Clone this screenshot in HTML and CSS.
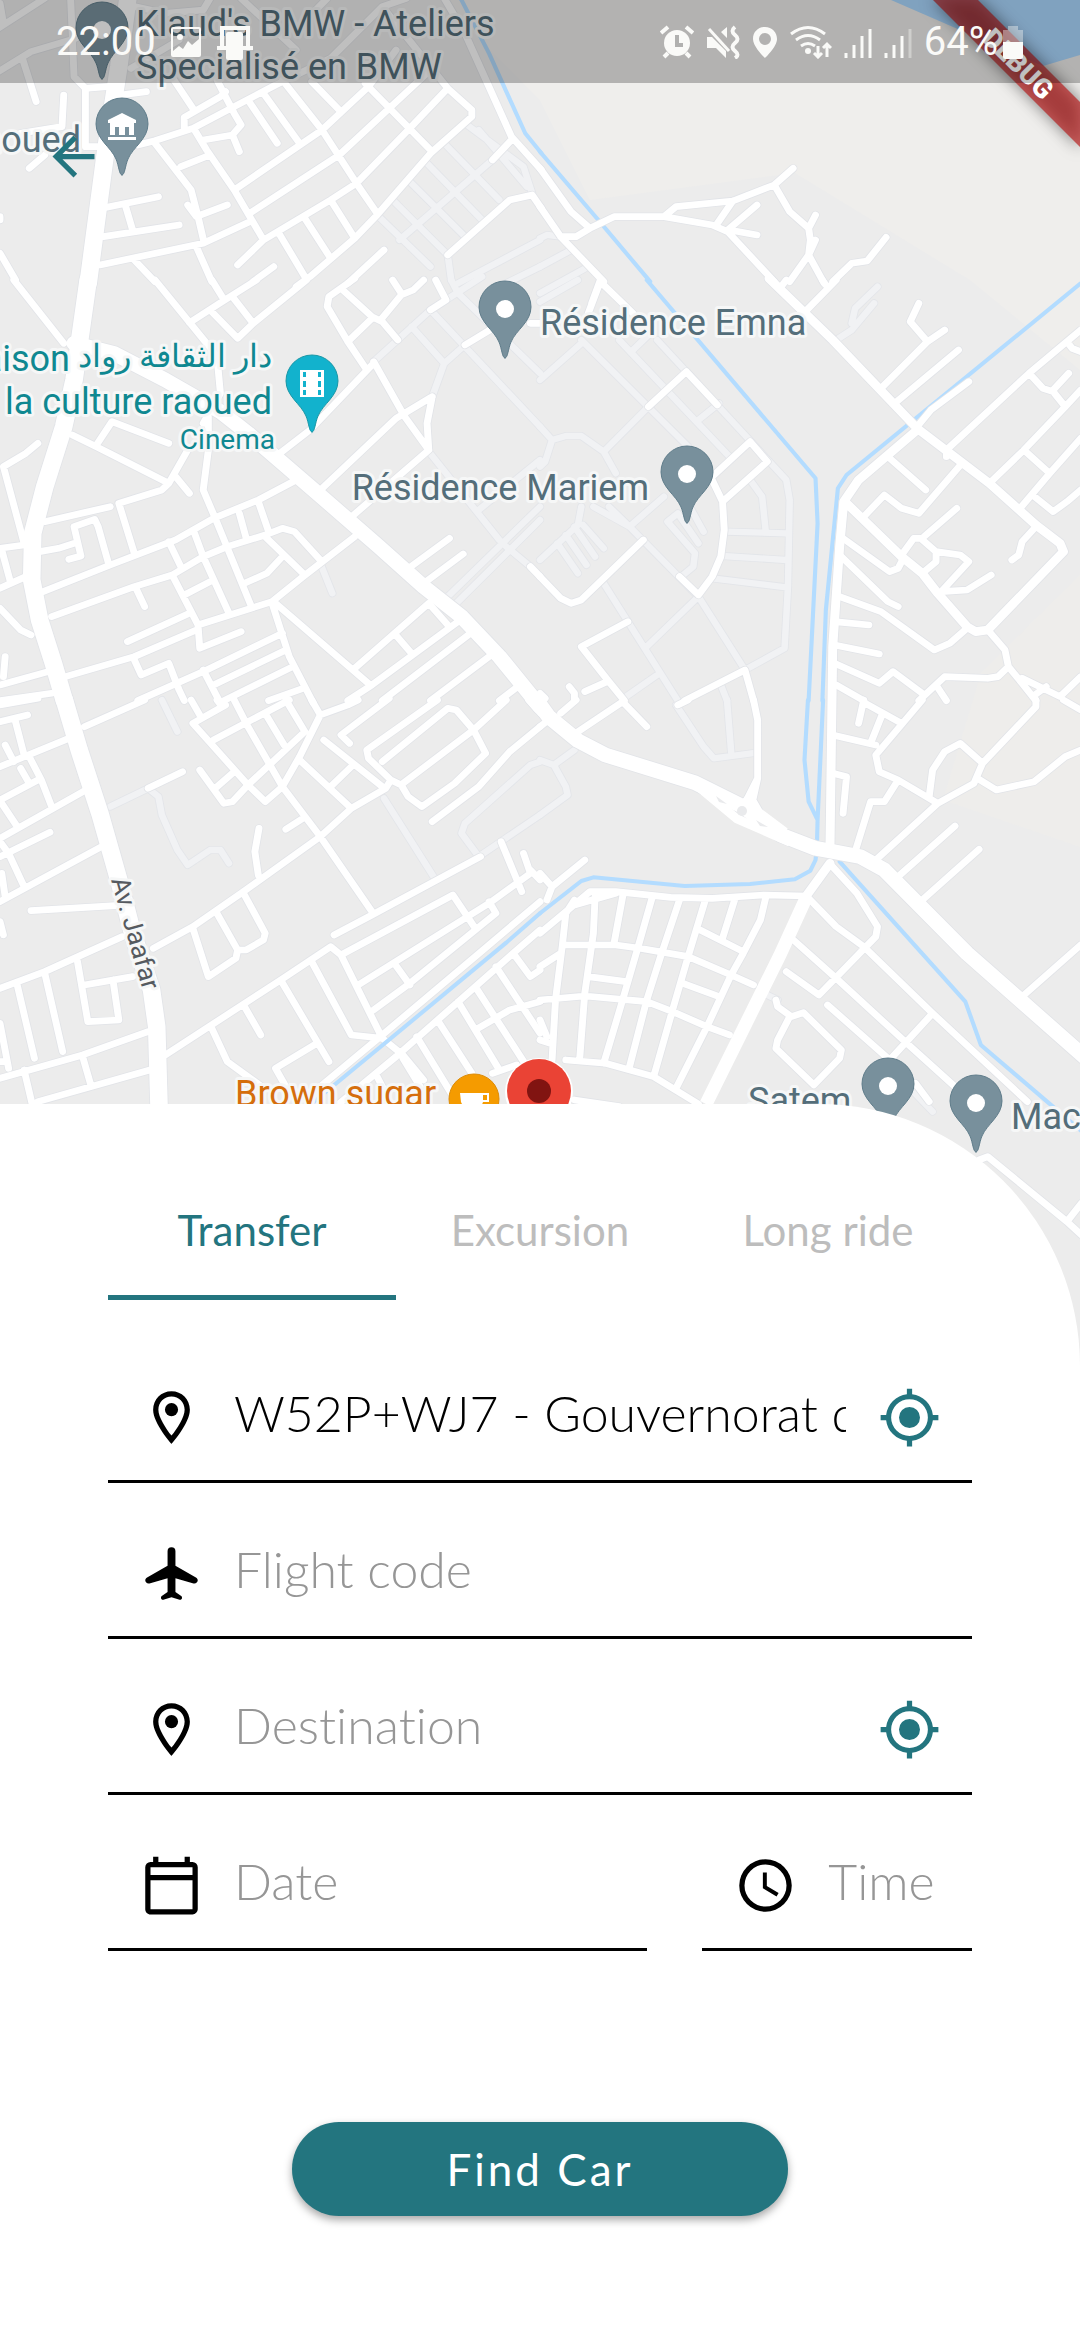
FILE: index.html
```html
<!DOCTYPE html>
<html lang="en">
<head>
<meta charset="utf-8">
<meta name="viewport" content="width=device-width, initial-scale=1">
<title>Find a car</title>
<link rel="stylesheet" href="styles.css">
</head>
<body>
<svg class="sprite" aria-hidden="true">
  <symbol id="i-place" viewBox="0 0 24 24"><path d="M12 2C8.1 2 5 5.1 5 9c0 5.200 7 13 7 13s7-7.800 7-13c0-3.900-3.100-7-7-7zM7 9c0-2.800 2.200-5 5-5s5 2.200 5 5c0 2.900-2.900 7.200-5 9.900C9.900 16.200 7 11.800 7 9z"/><circle cx="12" cy="9" r="2.500"/></symbol>
  <symbol id="i-locate" viewBox="0 0 24 24"><path d="M12 8a4 4 0 1 0 0 8 4 4 0 0 0 0-8zm8.900 3A9 9 0 0 0 13 3.100V1h-2v2.100A9 9 0 0 0 3.100 11H1v2h2.100A9 9 0 0 0 11 20.900V23h2v-2.100a9 9 0 0 0 7.900-7.900H23v-2h-2.100zM12 19a7 7 0 1 1 0-14 7 7 0 0 1 0 14z"/></symbol>
  <symbol id="i-plane" viewBox="0 0 24 24"><path d="M22 14.600c0-.500-.3-.9-.7-1.100L13.500 9V3.500a1.500 1.500 0 0 0-3 0V9l-7.800 4.500c-.4.200-.7.700-.7 1.100 0 .8.800 1.400 1.600 1.200l6.900-2V19l-2.200 1.600c-.2.100-.3.400-.3.600v.1c0 .5.500.8.900.7L12 21l3.100 1c.4.100.9-.2.900-.7v-.1c0-.2-.1-.5-.3-.6L13.500 19v-5.200l6.900 2c.8.200 1.600-.4 1.600-1.200z"/></symbol>
  <symbol id="i-calendar" viewBox="0 0 24 24"><path d="M20 3h-1V1h-2v2H7V1H5v2H4a2 2 0 0 0-2 2v16c0 1.100.9 2 2 2h16a2 2 0 0 0 2-2V5a2 2 0 0 0-2-2zm0 18H4V10h16v11zm0-13H4V5h16v3z"/></symbol>
  <symbol id="i-clock" viewBox="0 0 24 24"><path d="M12 2a10 10 0 1 0 0 20 10 10 0 0 0 0-20zm0 18a8 8 0 1 1 0-16 8 8 0 0 1 0 16zm.5-13H11v6l5.200 3.200.8-1.300-4.500-2.700V7z"/></symbol>
</svg>

<main class="screen">
  <section class="map" aria-label="Map">
    <svg class="map-canvas" viewBox="0 0 1080 1366">
      <defs>
        <g id="river">
          <path transform="scale(.3444 .3333)" d="M1335-10L1420 160 1525 400 1572 460"/>
          <path transform="translate(540) scale(.3444 .3333)" d="M0 455L165 655 320 845"/>
          <path transform="translate(540 280) scale(.3444 .3333)" d="M310 0L800 595 806 730 780 1262M1570 10L890 585 865 625 830 990 820 1262"/>
          <path transform="translate(540 700) scale(.3444 .3333)" d="M778 0L768 180 780 305 806 360M822 0L806 360 804 440 800 480 785 512 740 538 610 552 420 558 155 532 120 543 0 640M870 485L1235 905 1280 1035 1580 1300"/>
        </g>
        <g id="stream">
          <path transform="translate(0 700) scale(.3444 .3333)" d="M1568 640L1470 728 1135 1015 900 1215"/>
        </g>
        <g id="tracks">
          <path transform="scale(.3444 .3333)" d="M1350 370L1520 500 1545 580M1290 430L1450 600M1240 490L1400 660M1190 545L1350 710M1140 600L1300 765 1310 840M1100 650L1250 800M1430 480L1160 720M1390 390L1530 560M1568 720L1330 850M1568 800L1450 860"/>
          <path transform="translate(540) scale(.3444 .3333)" d="M0 715L20 705 60 710M0 800L90 750M0 880L140 800"/>
          <path transform="translate(0 280) scale(.3444 .3333)" d="M930 850L965 940M1290 960L1568 680M1320 975L1568 720M1245 515L1450 780M1470 800L1540 860M1085 245L1250 90 1400-10M1310 0L1330 40M1350 195L1290 250 1255 350M1250 90L1568 440M1330 40L1568 280M1195 140L1290 250M1390 690L1568 540"/>
          <path transform="translate(540 280) scale(.3444 .3333)" d="M0 65L110 0M0 300L120 190M120 180L430 500M230 180L550 530M340 180L715 600 725 660 720 920 710 1105 595 1170M315 380L185 515 220 580M0 440L35 480 75 468H120L185 515M35 480L15 545 0 560M120 680L110 735 0 840M155 680L260 740 360 650M200 680L260 740 460 950 595 1170M610 600L645 650 655 750M540 755L715 760M530 828L715 840M500 895L715 922M460 950L305 1105M185 910L400 1262M340 1185L250 1250M520 370L460 420M270 210L320 160M50 790L110 880M75 765L135 855M100 740L160 830M125 735L185 805M410 890L445 860 450 820 370 725 400 700 460 790M440 690L475 755M860 180L905 150 970 70M905 130L915 85 980 20M525 1215L543 1262"/>
          <path transform="translate(0 700) scale(.3444 .3333)" d="M470 0L515 95M320 320L430 265 460 290 470 345 515 450 545 495 610 450H640L665 490M1115 295L1265 540M1568 185L1540 195 1350 370 1340 400 1390 470 1568 345"/>
          <path transform="translate(540 700) scale(.3444 .3333)" d="M395 15L475 140 505 175 630 158M543 0L555 155M0 180L40 195 100 150M40 195L75 260 80 285 0 345M650 880L690 900M1070 1160L1140 1235"/>
        </g>
        <g id="streets">
          <path transform="scale(.3444 .3333)" d="M-5 85L130-5M-5 215L90 155 220 115M0 10L10 70M65 175L105 305M205-5L215 230 248 265V440H300M248 265L310 260M85 505L130 465M185 285L180 380 60 400M350 285L425 275M400 435L450 422 560 385 680 320 800 255 960 175 1110 20 1180-5M370 15L480 40 590 30 610-5M380 205L520 120M1110 20L1300 265M700-5L860 150M860 90L950-5M1300 265L1370 330V350L1250 460 1095 645 1030 715 900 830 860 860M450 430L555 570 575 650 592 725M535 385V352L640 290 655 275M560 325L505 240M630 240L655 290 680 340 700 375 675 405 590 420M675 405L695 455M565 390L600 450 680 570 765 720 690 795M680 570L935 390 1070 260 1150 150M720 300L805 430M765 280L870 430M820 240L935 390 1035 550 1095 640M905 245L985 330M725 640L985 465 1130 325 1260 200M1060 250L1250 450M1300 265L1190 385 1035 550 960 600 765 720M810 700L885 830M885 655L960 775M960 600L1030 715M725 665L590 730 290 795M570 740L615 845M795 800L735 845M1115 750L1010 850M390 780L450 845M300 710L520 675M365 620L385 690M310 622L460 590M545 615L570 650 660 615M525 500L610 465M0 650V660M0 760L45 840M1290-5L1350 100 1485 410 1572 510M1485 420L1430 480M1300 765L1480 600 1545 585 1572 625"/>
          <path transform="translate(540) scale(.3444 .3333)" d="M0 505L90 635 145 685M0 620L60 710 185 845M60 710H105L145 685 215 650H360L395 620 560 603 680 555 735 505M360 650L500 675 545 695 680 845M560 603L515 670M545 690L630 615M550 690L630 705M680 555L725 635 780 685 785 720 780 765 725 845M780 685L800 645M780 765L800 720M780 765L825 850M850 845L905 790 950 783 1005 712"/>
          <path transform="translate(0 280) scale(.3444 .3333)" d="M40 0L185 190M450 0L600 190 630 230 640 340 590 430M550 128L640 68 745 0M615 0L645 50M610 90L690 175 735 130 890 0M675 50L735 130M1030-5L955 50 950 80 1010 185 1065 270M990 25L1080 110 1110 125 1155 180M1010 185L1080 115M1105 120L1165 45 1200 30 1230 0M1140 0L1165 40M1265 0L1295 60 1250 90M1085 250L900 450 800 530M1085 245L1175 410 1245 510M1255 350L1150 415 920 640M1255 350L1240 430 1245 510 1010 720M1350 195L1430 145M1540 130H1570M210 465L280 500 490 610 545 510M280 495L325 425 490 490M490 610L470 630 345 670 390 820M510 590L550 640M605 410L605 510 590 630 625 715 730 980M110 490L75 520 10 560 70 790M130 725L320 680M115 815L170 805 215 790M200 838L235 828 215 740 275 718 285 740 315 850M0 805L70 795M5 810L30 905M0 925L75 890M125 935L320 855 510 780 620 715 750 660 860 600M150 1010L390 920 500 885 590 830 660 800 770 765 820 745 855 755 930 840M395 925L420 980M750 665L780 755M695 700L715 775M490 785L525 860M565 760L590 830 665 1000M500 885L575 1035 790 965 880 890 1030 770M535 945L610 905M770 770L880 880M820 830L775 880 710 910M800 970L1075 1215M790 970L840 1130 910 1270M575 1035L580 1105 700 1055M370 1085L550 1000M190 1190L390 1130 570 1050M390 1140L410 1185 490 1150 520 1230 535 1262M400 1262L600 1170 820 1060M590 1170L640 1270M620 1215L830 1110M650 1262L850 1160M780 1262L880 1225M0 985L60 1050 90 1065M0 1215L140 1175M15 1130L10 1190M0 1262L150 1240M1180 870L1305 775M1230 910L1345 822M1245 970L1030 1165M1245 970L1300 1035M1330 1025L1080 1215 1010 1262M1145 1060L1195 1120M1360 1065L1110 1262M1420 1130L1250 1262M1510 1215L1450 1262M1540 860L1568 890"/>
          <path transform="translate(540 280) scale(.3444 .3333)" d="M1095 440L1135 390 1245 305M770 95L860 0M700 20L715 0M820 0L830 15M990 325L1125 185 1075 125 1100 70M1125 185L1175 150M1030 370L1215 210M1180 530V510L1420 280 1570 150M1420 280L1460 325 1490 335 1525 380M1490 330L1535 280M1570 330L1525 380 1405 510 1480 580 1570 475M1405 510L1310 605M1390 690L1480 580M1430 645L1490 695 1530 665 1570 630M1530 185L1545 205 1570 215M1010 530L1120 630M940 710L1000 645 1050 685 1100 700 1225 550M1115 770L1210 685M1050 825L1085 775H1105L1150 815 1220 825 1245 845 1165 935 1240 930 1310 885M1150 815V845L1110 880M880 775L1015 875 1040 865 1055 835M875 830L1010 965 1040 980M870 950L990 995 1145 1110 1190 1090 1240 1045M855 1025L955 1035M855 1095L985 1122M855 1150L985 1210 1025 1175 1110 1240M1440 740L1400 785 1390 825 1370 840M1300 1050L1350 1110 1360 1160 1400 1210 1440 1262M1360 1160L1330 1190 1300 1195 1175 1190 1100 1262M1150 1215L1180 1262M1400 1195L1510 1250 1570 1190M860 1215L940 1262M1470 1220L1430 1250M140 100L175 5 270 100M150 70L175 0M315 380L425 275 515 375M500 590L610 485 660 545 530 665M500 600L530 665 535 750 525 830 500 890 460 945 405 890M300 780L120 960 90 970 60 955 0 890M255 1025L120 1100 200 1205 245 1262M130 1235L195 1205M85 1220L100 1240V1262M420 1262L595 1170 620 1262M0 1240L15 1255"/>
          <path transform="translate(0 700) scale(.3444 .3333)" d="M0 15L110-5M0 65L80 45M45 65L70 165M15 135L40 185M0 200L200 115M245 80L420 0M85 170L120 240 150 320M60 205L85 250M0 300L110 240M5 310L50 380M0 415L250 270M0 425L25 460 70 560M0 470L145 397M0 605L295 440M5 520L15 590M90 632L335 617M0 665L10 705M0 865L130 815 355 710M50 855L100 1075M130 820L182 1055M225 785L255 965 345 960 328 840M245 855L385 830M0 970L25 1105M0 1135L240 1065 430 995M70 1110L95 1220M240 1070L265 1160M110 1205L435 1110M0 1085H15M445 745L560 680 700 580 930 410 1020 325 1120 265 1135 240M430 265L530 215M560 685L605 830 685 775 690 750 630 640M690 750H715L765 720 770 700 710 585M750 525L740 455 752 385M580 210L650 310 675 305 720 255 560 70 655 15M555 0L580 45M630 0L645 20M720 255L770 305 820 260 870 170 930 45 1010 15 1040 0M625 265L680 215M620 120L840 0M680 0L720 80 820 260 930 410 1080 635M770 40L825 135M830 0L885 95M905 0L930 45M720 255L885 95M830 388L880 355M870 180L1020 325M940 120L1110 260M960 260L1025 195M1130-5L990 105 1015 130M1270 0L1065 150 1070 175 1135 240 1165 255 1185 290 1225 320 1320 250 1410 160 1375 90 1325 30 1300 25 1110 185M1170 250L1375 90 1470 0M1255 365L1390 260 1480 155 1568 80M1535 0L1570 40M480 1065L815 840 960 740 990 765 1110 1015 1170 1065 1230 1140M970 705L1080 645 1260 545 1395 470M990 765L1315 585 1380 685M1040 855L1420 610 1540 520 1520 460M1540 510L1568 540M1455 425L1515 575M1420 605L1440 640 1380 690 1190 850 1085 930M1145 790L1190 855M905 785L1020 1005 1110 1015M815 840L955 1085M710 920L757 1005M615 985L660 1085 760 1160M920 1030L800 1105 830 1160M1568 605L1400 752 1110 1005 930 1160M1568 690L1490 760 1150 1070 980 1215M1210 1010L1310 1180M1270 960L1370 1120M1330 905L1450 1110M1380 860L1530 1100M1440 800L1568 1000M1490 760L1540 830 1568 810M1380 990L1480 930 1568 905M1170 1075L1220 1160M1095 1130L1120 1180M1430 1120L1500 1095"/>
          <path transform="translate(540 700) scale(.3444 .3333)" d="M0 700L145 575H220L380 592 500 595 650 585 775 588M60 40L105 0M0 80L25 60M110 95L240 5 310 80M400 15L430 0M620 0L632 60V235L600 300M632 235L618 300 640 340M130 480L35 560 0 520M35 560L20 600M100 615L220 580M100 600L75 640 65 735 45 900 35 1080M160 590L155 700 130 880 115 1080M240 590L215 730M325 595L285 740 240 900 185 1090M405 600L350 770 310 900 260 1100M480 600L430 770 385 930 330 1130M565 600L530 715M655 595L640 660 590 760 555 825 485 980 395 1165M70 735H220L290 745 430 770 555 825 620 855M465 690L590 755M140 830L250 845M0 900L130 888 310 905 385 935 485 980 550 1005M415 850L520 890M75 1080L190 1090 330 1130 460 1212M0 800L60 760M0 1020L30 1030M0 960L20 1010M100 1200L230 1220M845 495L920 580 980 680 975 710 810 885 715 815M780 595L860 680 940 740 1140 940 1415 1205M725 710L860 835 1060 1025 1210 1165M1140 940L1020 1075M835 915L1010 1075M685 900L690 920 730 950 765 938 875 1050 870 1075 795 1155 685 1045 690 1020 725 950M1400 890L1570 735M1110 600L1275 448M1045 525L1205 378M975 480L1155 310 1260 250 1285 190 1440 20V0M1130 290L1140 210 1175 155 1220 130 1280 185M1270 235L1325 270 1435 245 1525 170 1570 150M1155 310L1040 240 985 215 975 165 1110 0M1040 240L1000 305H960L915 455M850 105L975 135M850 220L890 230 880 340M940 0L925 70M945 10L1050 70M995 40L960 130M1520 0L1570 30M1090 1150L1130 1205M1275 1380L1300 1370 1530 1565 1572 1605M1530 1565L1572 1510"/>
        </g>
        <g id="roads">
          <path transform="translate(540 280) scale(.3444 .3333)" d="M665-5L850 180 1095 445 1305 610 1440 735 1510 790 1520 815 1300 1050 1265 1055 1240 1040 1155 940 1110 880 1050 830 935 715 885 665M1095 450L925 600 882 665 870 800 850 1100 842 1700M842 1750L775 1845"/>
        </g>
        <g id="avenues">
          <path transform="scale(.3444 .3333)" d="M372-10L345 200 310 430 256 850"/>
          <path transform="translate(0 280) scale(.3444 .3333)" d="M256 0L215 300 185 440 130 620 95 760 92 900 115 1020 155 1150 187 1262"/>
          <path transform="translate(0 700) scale(.3444 .3333)" d="M187 0L230 150 290 340 345 540 385 700 440 870 455 980 464 1300"/>
        </g>
        <g id="boulevard">
          <path transform="translate(0 280) scale(.3444 .3333)" d="M215 190L330 220 480 300 640 395 720 460 900 620 1100 800 1230 920 1340 1010 1450 1130 1568 1280"/>
          <path transform="translate(540 700) scale(.3444 .3333)" d="M-10 0L25 50 110 122 190 165 450 248 590 320 700 405 800 445 930 470 1000 510 1240 760 1580 1070"/>
        </g>
        <path id="pin" d="M0 50C-3 50-3 41-6 34C-11 22-26 14-26-1A26 26 0 0 1 26-1C26 14 11 22 6 34C3 41 3 50 0 50Z"/>
      </defs>

      <rect width="1080" height="1366" fill="#ececec"/>
      <path d="M440 0L540 100 590 200 795 173 970 280 1080 370V0Z" fill="#efeeec"/>
      <path d="M1080 575L981 673 943 800 1080 847Z" fill="#eeedeb"/>
      <path d="M891 0L1043 66 1080 55V0Z" fill="#abd8ff"/>

      <use href="#tracks" class="tracks-edge"/>
      <use href="#tracks" class="tracks"/>
      <use href="#river" class="river"/>
      <use href="#streets" class="streets-edge"/>
      <use href="#roads" class="roads-edge"/>
      <use href="#avenues" class="avenues-edge"/>
      <use href="#boulevard" class="boulevard-edge"/>
      <use href="#streets" class="streets"/>
      <use href="#stream" class="river"/>
      <use href="#roads" class="roads"/>
      <use href="#avenues" class="avenues"/>
      <use href="#boulevard" class="boulevard"/>
      <path d="M807 896L780 955 706 1104" class="promenade"/>
      <path d="M700 788L737 819 790 842M742 800L785 832" class="junction"/>
      <circle cx="742" cy="811" r="5" fill="#e9eaec"/>
      <path d="M716 796l11 8-8-2zM756 820l12 7-8-1z" fill="#e9eaec"/>

      <g class="pins">
        <use href="#pin" x="102" y="29"/>
        <use href="#pin" x="122" y="125"/>
        <use href="#pin" x="505" y="308"/>
        <use href="#pin" x="687" y="473"/>
        <use href="#pin" x="888" y="1085"/>
        <use href="#pin" x="976" y="1102"/>
      </g>
      <use href="#pin" x="312" y="382" fill="#12b2cd" stroke="#1a97a6" stroke-width="1"/>
      <g fill="#fff">
        <circle cx="102" cy="30" r="9"/><circle cx="505" cy="309" r="9"/><circle cx="687" cy="474" r="9"/><circle cx="888" cy="1086" r="9"/><circle cx="976" cy="1103" r="9"/>
        <path d="M122 113l14 7v3h-2v12h-5v-8h-4v8h-6v-8h-4v8h-5v-12h-2v-3zM108 137h28v3h-28z"/>
        <path fill-rule="evenodd" d="M300 370h24v27h-24zM303 372v5h3v-5zM303 381v6h3v-6zM303 390v5h3v-5zM318 372v5h3v-5zM318 381v6h3v-6zM318 390v5h3v-5z"/>
      </g>
      <circle cx="474" cy="1099" r="25" fill="#f59b00" stroke="#dd8b06" stroke-width="1"/>
      <path d="M460 1093h29v9h-6c-2 9-19 9-22 0zM483 1095v5h4v-5z" fill="#fff" fill-rule="evenodd"/>
      <circle cx="539" cy="1092" r="34" fill="#fff"/>
      <circle cx="539" cy="1091" r="32" fill="#ea4335"/>
      <circle cx="539" cy="1091" r="12" fill="#811411"/>

      <g class="labels">
        <text x="136" y="36">Klaud's BMW - Ateliers</text>
        <text x="136" y="79">Spécialisé en BMW</text>
        <text x="81" y="152" text-anchor="end">Raoued</text>
        <text x="540" y="335">Résidence Emna</text>
        <text x="649" y="500" text-anchor="end">Résidence Mariem</text>
        <text x="748" y="1113">Satem</text>
        <text x="1011" y="1129">Mac</text>
        <g class="culture">
          <text x="70" y="371" text-anchor="end">Maison</text>
          <text x="272" y="367" text-anchor="end" lang="ar" class="arabic">دار الثقافة رواد</text>
          <text x="272" y="414" text-anchor="end">de la culture raoued</text>
          <text x="275" y="449" text-anchor="end" class="kind">Cinema</text>
        </g>
        <text x="235" y="1106" class="cafe">Brown sugar</text>
        <text transform="translate(111 880) rotate(74)" class="avenue-name">Av. Jaafar</text>
      </g>
    </svg>

    <button class="back" type="button" aria-label="Back">
      <svg viewBox="0 0 24 24"><path d="M20 11H7.800l5.600-5.600L12 4l-8 8 8 8 1.400-1.400L7.800 13H20z"/></svg>
    </button>

    <svg class="banner" viewBox="0 0 180 180">
      <path class="band" d="M32-1H77L181 103V148Z"/>
      <text transform="translate(118 64) rotate(45)" y="9">DEBUG</text>
    </svg>

    <header class="status">
      <div class="status-group">
        <time>22:00</time>
        <svg width="32" height="34" viewBox="0 0 32 34"><path fill-rule="evenodd" d="M3 2h26q2 0 2 2v26q0 2-2 2H3q-2 0-2-2V4q0-2 2-2zm0 2v22l6-5 4 3 5-8 4 4 7-6V4z"/><circle cx="10" cy="12" r="3"/></svg>
        <svg width="38" height="36" viewBox="0 0 38 36"><path d="M4 2h30v20h3v4H1v-4h3zM8 6v16h22V6z" fill-rule="evenodd"/><rect x="10" y="8" width="17" height="28" rx="2"/></svg>
      </div>
      <div class="status-group">
        <svg width="34" height="34" viewBox="0 0 34 34"><circle cx="17" cy="18" r="13"/><path d="M1 8l7-6M33 8l-7-6M8 28l-4 4M26 28l4 4" class="line"/><path d="M17 10v10h6" class="hole"/></svg>
        <svg width="34" height="34" viewBox="0 0 34 34"><path d="M1 12h5l14 14v7L10 23H1zM15 7l6-5v11z"/><path d="M3 4l20 22" class="line thin"/><path d="M29 2q-5 4 0 8t0 8 0 8 0 7" class="line"/></svg>
        <svg width="26" height="34" viewBox="0 0 26 34"><path fill-rule="evenodd" d="M13 2C6 2 1 7 1 14c0 8 12 19 12 19s12-11 12-19C25 7 20 2 13 2zm0 6a6 6 0 1 1 0 12 6 6 0 0 1 0-12z"/></svg>
        <svg width="42" height="34" viewBox="0 0 42 34"><path d="M1 9q17-13 34 0M6 15q12-9 24 0M11 21q7-5 14 0" class="line thin"/><circle cx="18" cy="26" r="3"/><path d="M28 21v11M24 28l4 4 4-4M37 32V19M33 23l4-4 4 4" class="line thin"/></svg>
        <svg width="28" height="34" viewBox="0 0 28 34"><path d="M2 28v5M10 20v13M18 11v22M26 4v29" class="line thin"/></svg>
        <svg width="28" height="34" viewBox="0 0 28 34"><path d="M2 28v5M10 20v13M18 11v22" class="line thin"/><path d="M26 4v29" class="line thin faint"/></svg>
        <span class="battery">64%
          <svg width="22" height="34" viewBox="0 0 22 34"><path d="M6 1h10v4h5v12H1V5h5z" opacity=".4"/><path d="M1 17h20v15q0 2-2 2H3q-2 0-2-2z"/></svg>
        </span>
      </div>
    </header>
  </section>

  <section class="sheet">
    <div class="tabs" role="tablist">
      <button class="tab active" type="button" role="tab" aria-selected="true">Transfer</button>
      <button class="tab" type="button" role="tab" aria-selected="false">Excursion</button>
      <button class="tab" type="button" role="tab" aria-selected="false">Long ride</button>
    </div>

    <form class="ride">
      <div class="field">
        <label for="pickup" aria-label="Pickup"><svg><use href="#i-place"/></svg></label>
        <input id="pickup" type="text" value="W52P+WJ7 - Gouvernorat de l'Ariana">
        <button type="button" aria-label="Use my location for pickup"><svg><use href="#i-locate"/></svg></button>
      </div>
      <div class="field">
        <label for="flight" aria-label="Flight code"><svg><use href="#i-plane"/></svg></label>
        <input id="flight" type="text" placeholder="Flight code">
      </div>
      <div class="field">
        <label for="destination" aria-label="Destination"><svg><use href="#i-place"/></svg></label>
        <input id="destination" type="text" placeholder="Destination">
        <button type="button" aria-label="Use my location for destination"><svg><use href="#i-locate"/></svg></button>
      </div>
      <div class="when">
        <div class="field">
          <label for="date" aria-label="Date"><svg><use href="#i-calendar"/></svg></label>
          <input id="date" type="text" placeholder="Date">
        </div>
        <div class="field">
          <label for="time" aria-label="Time"><svg><use href="#i-clock"/></svg></label>
          <input id="time" type="text" placeholder="Time">
        </div>
      </div>
      <button class="find" type="submit">Find Car</button>
    </form>
  </section>
</main>
</body>
</html>
```

FILE: styles.css
```css
:root {
  --teal: #23757f;
  --hint: #969696;
  --inactive: #bdbdbd;
}

* {
  box-sizing: border-box;
}

body {
  margin: 0;
  background: #fff;
  font-family: Lato, "Open Sans", sans-serif;
  font-variant-ligatures: none;
  color: #000;
}

button,
input {
  margin: 0;
  padding: 0;
  border: 0;
  background: none;
  font: inherit;
  color: inherit;
}

.sprite {
  position: absolute;
  width: 0;
  height: 0;
}

.screen {
  min-height: 100vh;
  overflow: hidden;
}

/* Map */
.map {
  position: relative;
}

.map-canvas {
  display: block;
  width: 100%;
}

.map-canvas use {
  stroke-linecap: round;
  stroke-linejoin: round;
}

.tracks-edge,
.tracks,
.river,
.streets-edge,
.streets,
.roads-edge,
.roads,
.avenues-edge,
.avenues,
.boulevard-edge,
.boulevard,
.promenade,
.junction {
  fill: none;
}

.tracks-edge { stroke: #e3e5e9; stroke-width: 24px; }
.tracks { stroke: #f1f2f4; stroke-width: 19px; }
.river { stroke: #b3dcff; stroke-width: 12px; }
.streets-edge { stroke: #e2e4e8; stroke-width: 25px; }
.streets { stroke: #fff; stroke-width: 20px; }
.roads-edge { stroke: #e2e4e8; stroke-width: 31px; }
.roads { stroke: #fff; stroke-width: 26px; }
.avenues-edge { stroke: #e2e4e8; stroke-width: 56px; }
.avenues { stroke: #fff; stroke-width: 51px; }
.boulevard-edge { stroke: #e2e4e8; stroke-width: 49px; }
.boulevard { stroke: #fff; stroke-width: 44px; }
.promenade { stroke: #fff; stroke-width: 13px; }
.junction { stroke: #fff; stroke-width: 9px; }

.pins {
  fill: #78909c;
  stroke: #607d8b;
  stroke-width: 1px;
}

.labels {
  font-family: Roboto, sans-serif;
  font-size: 36px;
  fill: #546e7a;
  stroke: #f6f7f7;
  stroke-width: 6px;
  stroke-linejoin: round;
  paint-order: stroke;
}

.culture { fill: #0f8891; }
.arabic { font-size: 32px; }
.kind { font-size: 28px; }
.cafe { fill: #d56e0c; }
.avenue-name { font-size: 26px; fill: #555a60; }

.back {
  position: absolute;
  top: 125px;
  left: 42px;
  width: 63px;
  height: 63px;
}

.back svg {
  display: block;
  fill: var(--teal);
}

.banner {
  position: absolute;
  top: 0;
  right: 0;
  width: 180px;
  height: 180px;
}

.band {
  fill: #b71c1c;
  fill-opacity: .68;
  filter: drop-shadow(0 0 8px rgba(0, 0, 0, .7));
}

.banner text {
  font: 900 27px Roboto, sans-serif;
  fill: #fff;
  text-anchor: middle;
}

/* Status bar */
.status {
  position: absolute;
  top: 0;
  left: 0;
  right: 0;
  display: flex;
  justify-content: space-between;
  align-items: center;
  height: 83px;
  padding: 0 56px;
  background: rgba(0, 0, 0, .25);
  font-family: Roboto, sans-serif;
  font-size: 40px;
  color: #fafaf8;
}

.status-group {
  display: flex;
  align-items: center;
  gap: 12px;
}

.status-group:first-child {
  gap: 14px;
}

.battery {
  display: flex;
  align-items: center;
  gap: 4px;
}

.status svg {
  fill: currentColor;
}

.status .line {
  fill: none;
  stroke: currentColor;
  stroke-width: 4px;
}

.status .thin { stroke-width: 3px; }
.status .faint { opacity: .4; }

.status .hole {
  fill: none;
  stroke: #b1b1b0;
  stroke-width: 4px;
}

/* Booking sheet */
.sheet {
  position: relative;
  margin-top: -262px;
  padding: 60px 10% 124px;
  border-top-right-radius: 262px;
  background: #fff;
}

.tabs {
  display: grid;
  grid-template-columns: repeat(3, 1fr);
}

.tab {
  height: 136px;
  border-bottom: 5px solid transparent;
  font-size: 42px;
  color: var(--inactive);
}

.tab.active {
  border-color: var(--teal);
  color: var(--teal);
}

.ride {
  display: flex;
  flex-direction: column;
  gap: 27px;
  padding-top: 54px;
}

.field {
  display: flex;
  align-items: center;
  height: 129px;
  min-width: 0;
  border-bottom: 3px solid #000;
}

.field label,
.field button {
  flex: none;
  display: grid;
  place-items: center;
  width: 126px;
  height: 126px;
}

.field svg {
  width: 63px;
  height: 63px;
}

.field button {
  fill: var(--teal);
}

.field input {
  flex: 1;
  min-width: 0;
  height: 118px;
  align-self: flex-start;
  outline: 0;
  font-size: 50px;
  font-weight: 300;
}

.field input::placeholder {
  color: var(--hint);
  opacity: 1;
}

.when {
  display: grid;
  grid-template-columns: 2fr 1fr;
  gap: 55px;
}

.find {
  align-self: center;
  width: 496px;
  height: 94px;
  margin-top: 144px;
  border-radius: 47px;
  background: var(--teal);
  box-shadow: 0 4px 8px rgba(0, 0, 0, .35);
  font-size: 44px;
  letter-spacing: 3px;
  color: #fff;
}
```
